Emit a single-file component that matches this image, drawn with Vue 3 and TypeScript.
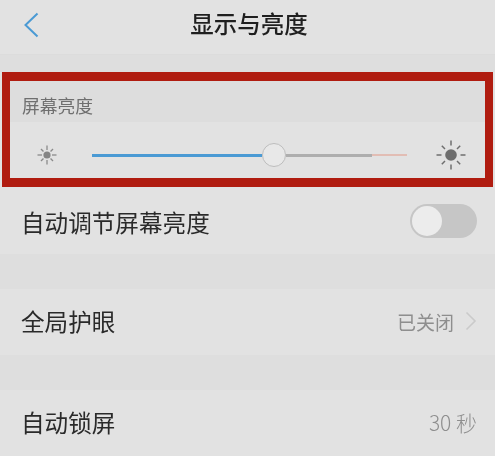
<template>
  <div class="screen">
    <header class="nav">
      <svg class="back" width="20" height="30" viewBox="0 0 20 30">
        <path d="M15.5 2.5 L3.5 14 L15.5 25.5" fill="none" stroke="#4a9ad4" stroke-width="2" />
      </svg>
      <h1 class="title">显示与亮度</h1>
    </header>
    <div class="gap top-gap"></div>

    <section class="brightness">
      <div class="label"><span>屏幕亮度</span></div>
      <div class="slider-row">
        <svg class="sun-small" width="22" height="22" viewBox="0 0 22 22">
          <circle cx="11" cy="11" r="3.6" fill="#858585" />
          <path
            v-for="ray in rays"
            :key="ray"
            :d="ray % 90 === 0 ? 'M11 1.5V6' : 'M11 2.5V6'"
            :transform="`rotate(${ray} 11 11)`"
            stroke="#8a8a8a"
            stroke-width="1.3"
          />
        </svg>
        <div class="track">
          <div class="fill"></div>
          <div class="thumb"></div>
          <div class="rest"></div>
          <div class="peak"></div>
        </div>
        <svg class="sun-big" width="30" height="30" viewBox="0 0 30 30">
          <circle cx="15" cy="15" r="5.8" fill="#6e6e6e" />
          <path
            v-for="ray in rays"
            :key="ray"
            :d="ray % 90 === 0 ? 'M15 0.5V5.5' : 'M15 2V6.5'"
            :transform="`rotate(${ray} 15 15)`"
            stroke="#6e6e6e"
            stroke-width="1.5"
          />
        </svg>
      </div>
    </section>

    <div class="row auto-row">
      <span class="name">自动调节屏幕亮度</span>
      <div class="switch"><div class="knob"></div></div>
    </div>
    <div class="gap"></div>
    <div class="row">
      <span class="name">全局护眼</span>
      <span class="value">
        已关闭
        <svg width="12" height="20" viewBox="0 0 12 20">
          <path d="M1.5 1.5 L10 10 L1.5 18.5" fill="none" stroke="#cacaca" stroke-width="1.6" />
        </svg>
      </span>
    </div>
    <div class="gap"></div>
    <div class="row">
      <span class="name">自动锁屏</span>
      <span class="value seconds">30 秒</span>
    </div>
  </div>
</template>

<script setup lang="ts">
const rays: number[] = [0, 45, 90, 135, 180, 225, 270, 315];
</script>

<style>
html,
body {
  margin: 0;
  background: #e2e2e2;
}
</style>

<style scoped>
.screen {
  width: 495px;
  height: 456px;
  overflow: hidden;
  background: #e2e2e2;
  font-family: "Noto Sans CJK SC", "Liberation Sans", sans-serif;
  filter: blur(0.35px);
}

.nav {
  height: 55px;
  display: flex;
  align-items: center;
  justify-content: center;
  position: relative;
  border-bottom: 1px solid #dcdcdc;
  box-sizing: border-box;
}

.back {
  position: absolute;
  left: 22px;
  top: 11px;
}

.title {
  margin: 0;
  font-size: 23.5px;
  font-weight: 500;
  color: #1f1f1f;
  line-height: 1;
  padding: 0 0 6px 3px;
}

.gap {
  height: 35px;
  background: #dedede;
}

.top-gap {
  height: 17px;
}

.brightness {
  margin: 0 2px;
  height: 115px;
  box-sizing: border-box;
  border: solid #b01c10;
  border-width: 9px 8px;
  background: #e2e2e2;
}

.label {
  height: 41px;
  display: flex;
  align-items: center;
  padding: 7px 0 0 12px;
  box-sizing: border-box;
  font-size: 17.75px;
  color: #6f6f6f;
  background: #dddddd;
}

.slider-row {
  height: 56px;
  display: flex;
  align-items: center;
  padding: 10px 19px 0 26px;
  box-sizing: border-box;
}

.track {
  width: 315px;
  height: 3px;
  margin: 0 29px 0 34px;
  display: flex;
  align-items: center;
}

.fill {
  width: 170px;
  height: 3px;
  background: #4a9ad4;
}

.thumb {
  width: 24px;
  height: 24px;
  box-sizing: border-box;
  border-radius: 50%;
  border: 1px solid #bdbdbd;
  background: #e8e8e8;
  flex: none;
}

.rest {
  width: 86px;
  height: 3px;
  background: #aeaeae;
}

.peak {
  width: 35px;
  height: 2px;
  background: #e2bdb4;
}

.row {
  height: 66px;
  display: flex;
  align-items: center;
  justify-content: space-between;
  padding: 0 18px 2px 21px;
  box-sizing: border-box;
}

.auto-row {
  height: 67px;
  padding-bottom: 0;
}

.auto-row .name {
  padding-top: 2px;
}

.name {
  font-size: 23.6px;
  color: #2a2a2a;
}

.value {
  display: flex;
  align-items: center;
  gap: 11px;
  font-size: 19px;
  color: #8e8e8e;
}

.seconds {
  font-size: 21px;
  font-weight: 300;
}

.switch {
  width: 67px;
  height: 34px;
  box-sizing: border-box;
  border-radius: 17px;
  background: #c6c6c6;
  padding: 2px;
}

.knob {
  width: 30px;
  height: 30px;
  border-radius: 50%;
  background: #ececec;
}
</style>
